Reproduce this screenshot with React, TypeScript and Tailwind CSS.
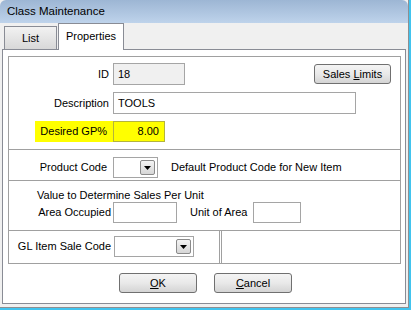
import React from "react";

type Props = { children?: React.ReactNode; className?: string };

function TextBox({ children, className = "" }: Props) {
  return (
    <div className={`border border-[#a5a5a5] flex items-center px-[4px] ${className}`}>
      {children}
    </div>
  );
}

function Arrow() {
  return (
    <svg width="7" height="4" viewBox="0 0 7 4">
      <path d="M0 0h7L3.5 4z" fill="#000" />
    </svg>
  );
}

function Combo({ className = "" }: Props) {
  return (
    <div className={`border border-[#a5a5a5] bg-white flex justify-end items-stretch p-[2px] ${className}`}>
      <div className="w-[15px] border border-[#8a8a8a] rounded-[2px] bg-gradient-to-b from-[#f4f4f4] to-[#d6d6d6] flex items-center justify-center">
        <Arrow />
      </div>
    </div>
  );
}

function Button({ children, className = "" }: Props) {
  return (
    <div
      className={`h-[20px] border border-[#707070] rounded-[3px] bg-gradient-to-b from-[#f4f4f4] via-[#e9e9e9] to-[#d4d4d4] flex items-center justify-center ${className}`}
    >
      {children}
    </div>
  );
}

export default function App() {
  return (
    <div className="w-[412px] h-[310px] bg-white font-['Liberation_Sans',Arial,sans-serif] text-[11px] text-black leading-none">
      <div className="w-[411px] h-[310px] border-r-2 border-b-2 border-[#41c4ef]">
        <div className="w-[409px] h-[308px] border-r border-b border-[#8d8f92] bg-[#f0f0f0] flex flex-col">
          {/* title bar */}
          <div className="h-[23px] rounded-tl-[6px] rounded-tr-[6px] bg-gradient-to-b from-[#9db6d4] to-[#bed3eb] flex items-center pl-[7px] text-[11.5px]">
            Class Maintenance
          </div>

          {/* tabs */}
          <div className="h-[26px] flex items-end pl-[4px] gap-[1px]">
            <div className="w-[53px] h-[23px] border border-b-0 border-[#898c95] bg-gradient-to-b from-[#f2f2f2] to-[#d8d8d8] flex items-center justify-center">
              List
            </div>
            <div className="relative z-10 w-[66px] h-[27px] -mb-px border border-b-0 border-[#898c95] bg-white flex items-start justify-center pt-[7px]">
              Properties
            </div>
          </div>

          {/* tab panel */}
          <div className="ml-[2px] w-[404px] h-[255px] border border-[#898c95] bg-white pl-[5px] pt-[6px]">
            <div className="w-[393px] h-[208px] border border-[#a0a0a0] flex flex-col">
              {/* section 1 */}
              <div className="h-[93px] border-b border-[#a0a0a0] pt-[6px] flex flex-col">
                <div className="flex items-center h-[22px]">
                  <div className="w-[100px] text-right">ID</div>
                  <TextBox className="ml-[4px] w-[72px] h-[22px] bg-[#f0f0f0]">18</TextBox>
                  <Button className="ml-[129px] w-[77px]">
                    <span>
                      Sales <span className="underline">L</span>imits
                    </span>
                  </Button>
                </div>
                <div className="flex items-center h-[22px] mt-[7px]">
                  <div className="w-[100px] text-right">Description</div>
                  <TextBox className="ml-[4px] w-[243px] h-[22px] bg-white">TOOLS</TextBox>
                </div>
                <div className="flex items-center h-[21px] mt-[7px] ml-[26px]">
                  <div className="w-[78px] h-[21px] bg-[#ffff00] flex items-center justify-end pr-[6px]">
                    Desired GP%
                  </div>
                  <div className="w-[52px] h-[21px] border border-[#b4b43c] bg-[#ffff00] flex items-center justify-end pr-[5px]">
                    8.00
                  </div>
                </div>
              </div>

              {/* section 2 */}
              <div className="h-[31px] border-b border-[#a0a0a0] pt-[7px] flex items-start">
                <div className="flex items-center h-[21px]">
                  <div className="w-[98px] text-right">Product Code</div>
                  <Combo className="ml-[6px] w-[45px] h-[21px]" />
                  <div className="ml-[13px]">Default Product Code for New Item</div>
                </div>
              </div>

              {/* section 3 */}
              <div className="h-[50px] border-b border-[#a0a0a0] pt-[7px] flex flex-col">
                <div className="h-[14px] leading-[14px] ml-[28px]">Value to Determine Sales Per Unit</div>
                <div className="flex items-center h-[21px]">
                  <div className="w-[102px] text-right">Area Occupied</div>
                  <TextBox className="ml-[2px] w-[64px] h-[21px] bg-white" />
                  <div className="ml-[13px]">Unit of Area</div>
                  <TextBox className="ml-[6px] w-[48px] h-[21px] bg-white" />
                </div>
              </div>

              {/* section 4 */}
              <div className="flex-1 flex gap-[1px]">
                <div className="w-[211px] border-r border-[#a0a0a0] pt-[5px]">
                  <div className="flex items-center h-[21px]">
                    <div className="w-[102px] text-right">GL Item Sale Code</div>
                    <Combo className="ml-[3px] w-[80px] h-[21px]" />
                  </div>
                </div>
                <div className="flex-1 border-l border-[#a0a0a0]" />
              </div>
            </div>

            {/* buttons */}
            <div className="flex mt-[9px] ml-[111px] gap-[17px]">
              <Button className="w-[78px]">
                <span>
                  <span className="underline">O</span>K
                </span>
              </Button>
              <Button className="w-[78px]">
                <span>
                  <span className="underline">C</span>ancel
                </span>
              </Button>
            </div>
          </div>
        </div>
      </div>
    </div>
  );
}
